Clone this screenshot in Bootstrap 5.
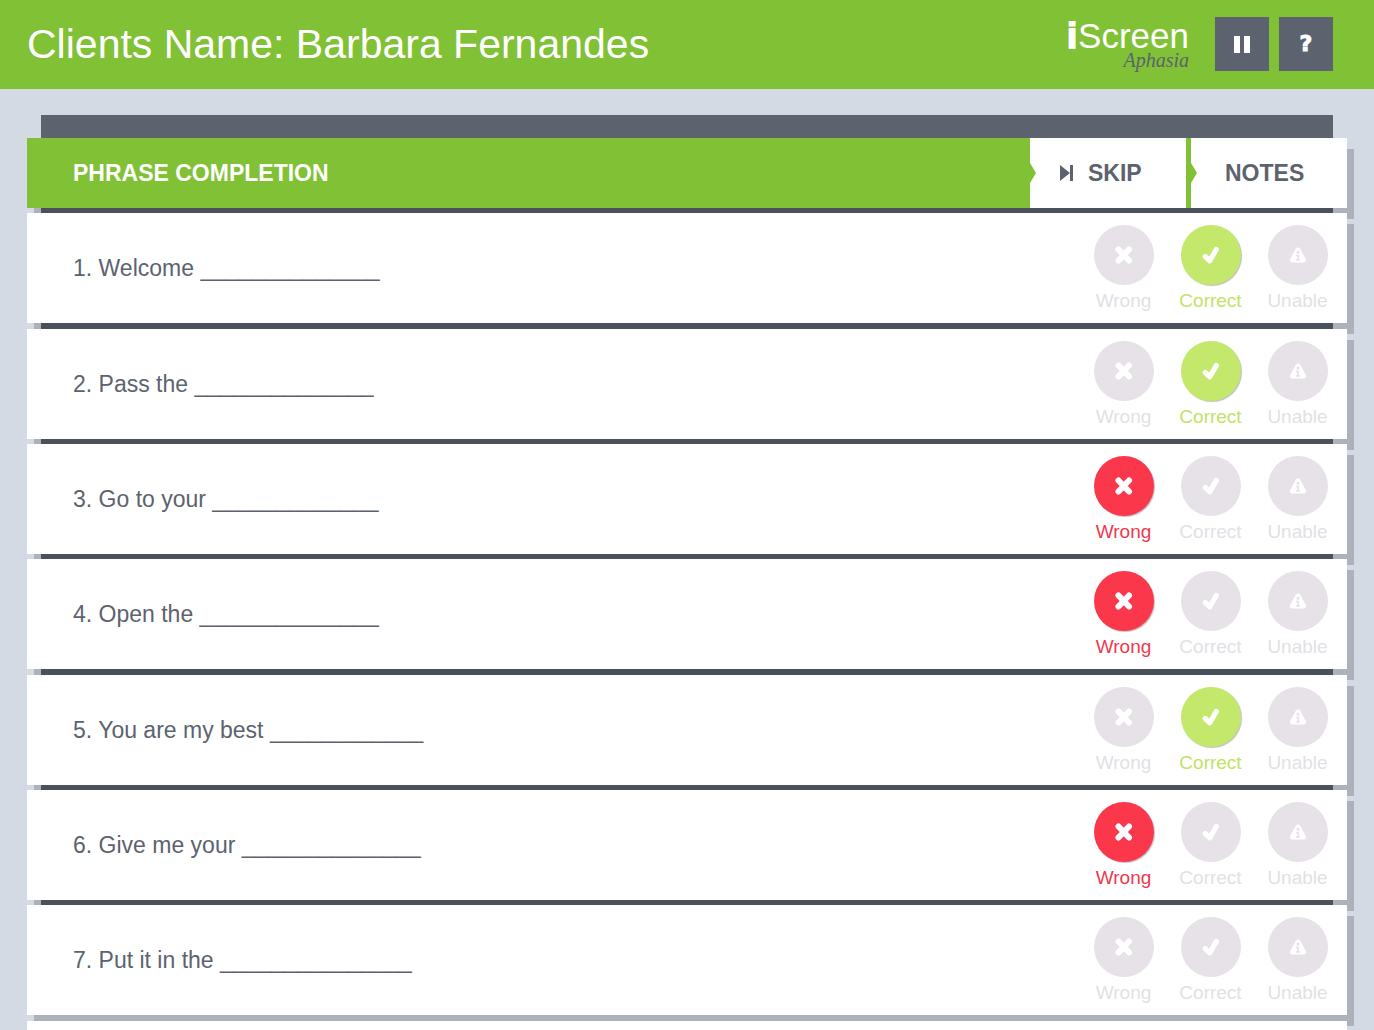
<!DOCTYPE html>
<html lang="en">
<head>
<meta charset="utf-8">
<meta name="viewport" content="width=device-width, initial-scale=1">
<title>iScreen Aphasia – Phrase Completion</title>
<link href="https://cdn.jsdelivr.net/npm/bootstrap@5.3.0/dist/css/bootstrap.min.css" rel="stylesheet">
<style>
:root{--leaf:#80c135;--slate:#5c636e;--page:#d4dae3;--idle:#e6e2e8;--lime:#c4e86b;--alert:#fb374b}
body{background:var(--page);color:var(--slate);font-family:"Liberation Sans",Arial,sans-serif;height:100vh}
.topbar{background:var(--leaf);color:#fff;height:89px;padding:0 41px 2px 27px}
.client{font-size:41px;line-height:48px;font-weight:400;color:#fff}
.brand-name{font-size:35px;line-height:36px}
.brand-name b{-webkit-text-stroke:2px #fff;margin-right:1px}
.brand-sub{font-family:"Liberation Serif","Times New Roman",serif;font-style:italic;font-size:20px;line-height:20px;margin-top:-4px;color:var(--slate)}
.logo-box{margin-right:16px}
.tool{width:54px;height:54px;background:var(--slate);color:#fff;border:0;border-radius:0;padding:0;font:bold 22px/24px "DejaVu Sans",sans-serif}
.tool-help{-webkit-text-stroke:1px #fff}
.tool:hover{background:#4c535d;color:#fff}
.top-tools{gap:10px}
.worksheet{overflow-y:auto;scrollbar-width:none;padding-top:26px}
.worksheet::-webkit-scrollbar{display:none}
.board{background:var(--slate);margin:0 41px;padding-top:23px}
.board .sheet{margin-left:-14px;margin-right:-14px}
.sheet{background:#fff;box-shadow:7px 11px 0 rgba(0,0,0,.18)}
.title-row{height:70px;margin-bottom:5px;background:var(--leaf)}
.title-row h2{font-size:23px;line-height:28px;padding-left:46px;color:#fff}
.tab-btn{position:relative;width:156px;background:#fff;color:var(--slate);border:0;border-radius:0;font-weight:700;font-size:23px;line-height:28px;padding:0 0 0 30px}
.tab-btn:hover{background:#f4f5f7;color:var(--slate)}
.tab-btn::before{content:"";position:absolute;left:0;top:25px;border:solid transparent;border-width:10px 0 10px 6px;border-left-color:var(--leaf)}
.tab-skip{gap:14px}
.tab-notes{margin-left:5px;padding-left:34px}
.phrase{min-height:110px;margin-bottom:5px;padding:12px 6px 10px 46px;font-size:23px;line-height:28px}
.phrase-text{padding-bottom:2px}
.phrase:nth-child(3n+1){margin-bottom:6px}
.board .phrase:last-child{margin-bottom:0}
.next-sheet{margin:6px 27px}
.mark-opt{width:87px;cursor:pointer;color:#e3e0e5;font-size:19px;line-height:24px}
.disc{width:60px;height:60px;border-radius:50%;background:var(--idle);margin-bottom:4px}
.btn-check:checked+.opt-right{color:#bfe364}
.btn-check:checked+.opt-wrong{color:#ee3a50}
.btn-check:checked+.mark-opt .disc{box-shadow:1px 1px 1px rgba(0,0,0,.25)}
.btn-check:checked+.opt-right .disc{background:var(--lime)}
.btn-check:checked+.opt-wrong .disc{background:var(--alert)}
.btn-check:focus-visible+.mark-opt .disc{outline:2px solid var(--slate)}
</style>
<script src="https://cdn.jsdelivr.net/npm/bootstrap@5.3.0/dist/js/bootstrap.bundle.min.js"></script>
</head>
<body class="d-flex flex-column overflow-hidden">
<svg class="d-none" aria-hidden="true">
  <symbol id="i-x" viewBox="0 0 20 20"><path d="M4.500 4.500l10.500 11M15 4.500l-10.500 11" stroke="#fff" stroke-width="6" stroke-linecap="round"/></symbol>
  <symbol id="i-check" viewBox="0 0 20 20"><path d="M4.200 11.500L8.800 15.800L15.300 4.500" fill="none" stroke="#fff" stroke-width="5.200" stroke-linecap="round" stroke-linejoin="round"/></symbol>
  <symbol id="i-warn" viewBox="0 0 20 20"><path d="M10 5L15.500 15H4.500Z" fill="#fff" stroke="#fff" stroke-width="5" stroke-linejoin="round"/><circle cx="10" cy="7.300" r="1.500" fill="#e6e2e8"/><path d="M8 10.500h2.200v4.300M8 15h4" fill="none" stroke="#e6e2e8" stroke-width="1.600"/></symbol>
</svg>

<header class="topbar d-flex align-items-center flex-shrink-0">
  <h1 class="client mb-0 me-auto">Clients Name: Barbara Fernandes</h1>
  <div class="top-tools d-flex align-items-center">
    <div class="logo-box text-end">
      <div class="brand-name"><b>i</b>Screen</div>
      <div class="brand-sub">Aphasia</div>
    </div>
    <button type="button" class="btn tool d-flex align-items-center justify-content-center" aria-label="Pause"><svg width="16" height="18" viewBox="0 0 16 18" fill="#fff"><path d="M0 1h6v17H0zM10 1h6v17h-6z"/></svg></button>
    <button type="button" class="btn tool tool-help" aria-label="Help">?</button>
  </div>
</header>

<main class="worksheet flex-grow-1">
  <section class="board">
    <div class="sheet title-row d-flex align-items-stretch">
      <h2 class="fw-bold mb-0 me-auto align-self-center">PHRASE COMPLETION</h2>
      <button type="button" class="btn tab-btn tab-skip d-flex align-items-center"><svg width="14" height="16" viewBox="0 0 14 16" fill="#5c636e" aria-hidden="true"><path d="M0 0L10 8L0 16zM10 0h3v16h-3z"/></svg>SKIP</button>
      <button type="button" class="btn tab-btn tab-notes text-start">NOTES</button>
    </div>
    <div class="phrases">
      <div class="sheet phrase d-flex align-items-center">
        <div class="phrase-text me-auto">1. Welcome ______________</div>
        <input class="btn-check" type="radio" name="q1" id="q1w"><label class="mark-opt opt-wrong d-flex flex-column align-items-center" for="q1w"><span class="disc d-flex align-items-center justify-content-center"><svg width="20" height="20"><use href="#i-x"/></svg></span>Wrong</label>
        <input class="btn-check" type="radio" name="q1" id="q1c" checked><label class="mark-opt opt-right d-flex flex-column align-items-center" for="q1c"><span class="disc d-flex align-items-center justify-content-center"><svg width="20" height="20"><use href="#i-check"/></svg></span>Correct</label>
        <input class="btn-check" type="radio" name="q1" id="q1u"><label class="mark-opt d-flex flex-column align-items-center" for="q1u"><span class="disc d-flex align-items-center justify-content-center"><svg width="20" height="20"><use href="#i-warn"/></svg></span>Unable</label>
      </div>
      <div class="sheet phrase d-flex align-items-center">
        <div class="phrase-text me-auto">2. Pass the ______________</div>
        <input class="btn-check" type="radio" name="q2" id="q2w"><label class="mark-opt opt-wrong d-flex flex-column align-items-center" for="q2w"><span class="disc d-flex align-items-center justify-content-center"><svg width="20" height="20"><use href="#i-x"/></svg></span>Wrong</label>
        <input class="btn-check" type="radio" name="q2" id="q2c" checked><label class="mark-opt opt-right d-flex flex-column align-items-center" for="q2c"><span class="disc d-flex align-items-center justify-content-center"><svg width="20" height="20"><use href="#i-check"/></svg></span>Correct</label>
        <input class="btn-check" type="radio" name="q2" id="q2u"><label class="mark-opt d-flex flex-column align-items-center" for="q2u"><span class="disc d-flex align-items-center justify-content-center"><svg width="20" height="20"><use href="#i-warn"/></svg></span>Unable</label>
      </div>
      <div class="sheet phrase d-flex align-items-center">
        <div class="phrase-text me-auto">3. Go to your _____________</div>
        <input class="btn-check" type="radio" name="q3" id="q3w" checked><label class="mark-opt opt-wrong d-flex flex-column align-items-center" for="q3w"><span class="disc d-flex align-items-center justify-content-center"><svg width="20" height="20"><use href="#i-x"/></svg></span>Wrong</label>
        <input class="btn-check" type="radio" name="q3" id="q3c"><label class="mark-opt opt-right d-flex flex-column align-items-center" for="q3c"><span class="disc d-flex align-items-center justify-content-center"><svg width="20" height="20"><use href="#i-check"/></svg></span>Correct</label>
        <input class="btn-check" type="radio" name="q3" id="q3u"><label class="mark-opt d-flex flex-column align-items-center" for="q3u"><span class="disc d-flex align-items-center justify-content-center"><svg width="20" height="20"><use href="#i-warn"/></svg></span>Unable</label>
      </div>
      <div class="sheet phrase d-flex align-items-center">
        <div class="phrase-text me-auto">4. Open the ______________</div>
        <input class="btn-check" type="radio" name="q4" id="q4w" checked><label class="mark-opt opt-wrong d-flex flex-column align-items-center" for="q4w"><span class="disc d-flex align-items-center justify-content-center"><svg width="20" height="20"><use href="#i-x"/></svg></span>Wrong</label>
        <input class="btn-check" type="radio" name="q4" id="q4c"><label class="mark-opt opt-right d-flex flex-column align-items-center" for="q4c"><span class="disc d-flex align-items-center justify-content-center"><svg width="20" height="20"><use href="#i-check"/></svg></span>Correct</label>
        <input class="btn-check" type="radio" name="q4" id="q4u"><label class="mark-opt d-flex flex-column align-items-center" for="q4u"><span class="disc d-flex align-items-center justify-content-center"><svg width="20" height="20"><use href="#i-warn"/></svg></span>Unable</label>
      </div>
      <div class="sheet phrase d-flex align-items-center">
        <div class="phrase-text me-auto">5. You are my best ____________</div>
        <input class="btn-check" type="radio" name="q5" id="q5w"><label class="mark-opt opt-wrong d-flex flex-column align-items-center" for="q5w"><span class="disc d-flex align-items-center justify-content-center"><svg width="20" height="20"><use href="#i-x"/></svg></span>Wrong</label>
        <input class="btn-check" type="radio" name="q5" id="q5c" checked><label class="mark-opt opt-right d-flex flex-column align-items-center" for="q5c"><span class="disc d-flex align-items-center justify-content-center"><svg width="20" height="20"><use href="#i-check"/></svg></span>Correct</label>
        <input class="btn-check" type="radio" name="q5" id="q5u"><label class="mark-opt d-flex flex-column align-items-center" for="q5u"><span class="disc d-flex align-items-center justify-content-center"><svg width="20" height="20"><use href="#i-warn"/></svg></span>Unable</label>
      </div>
      <div class="sheet phrase d-flex align-items-center">
        <div class="phrase-text me-auto">6. Give me your ______________</div>
        <input class="btn-check" type="radio" name="q6" id="q6w" checked><label class="mark-opt opt-wrong d-flex flex-column align-items-center" for="q6w"><span class="disc d-flex align-items-center justify-content-center"><svg width="20" height="20"><use href="#i-x"/></svg></span>Wrong</label>
        <input class="btn-check" type="radio" name="q6" id="q6c"><label class="mark-opt opt-right d-flex flex-column align-items-center" for="q6c"><span class="disc d-flex align-items-center justify-content-center"><svg width="20" height="20"><use href="#i-check"/></svg></span>Correct</label>
        <input class="btn-check" type="radio" name="q6" id="q6u"><label class="mark-opt d-flex flex-column align-items-center" for="q6u"><span class="disc d-flex align-items-center justify-content-center"><svg width="20" height="20"><use href="#i-warn"/></svg></span>Unable</label>
      </div>
      <div class="sheet phrase d-flex align-items-center">
        <div class="phrase-text me-auto">7. Put it in the _______________</div>
        <input class="btn-check" type="radio" name="q7" id="q7w"><label class="mark-opt opt-wrong d-flex flex-column align-items-center" for="q7w"><span class="disc d-flex align-items-center justify-content-center"><svg width="20" height="20"><use href="#i-x"/></svg></span>Wrong</label>
        <input class="btn-check" type="radio" name="q7" id="q7c"><label class="mark-opt opt-right d-flex flex-column align-items-center" for="q7c"><span class="disc d-flex align-items-center justify-content-center"><svg width="20" height="20"><use href="#i-check"/></svg></span>Correct</label>
        <input class="btn-check" type="radio" name="q7" id="q7u"><label class="mark-opt d-flex flex-column align-items-center" for="q7u"><span class="disc d-flex align-items-center justify-content-center"><svg width="20" height="20"><use href="#i-warn"/></svg></span>Unable</label>
      </div>
    </div>
  </section>
  <div class="sheet phrase next-sheet"></div>
</main>
</body>
</html>
